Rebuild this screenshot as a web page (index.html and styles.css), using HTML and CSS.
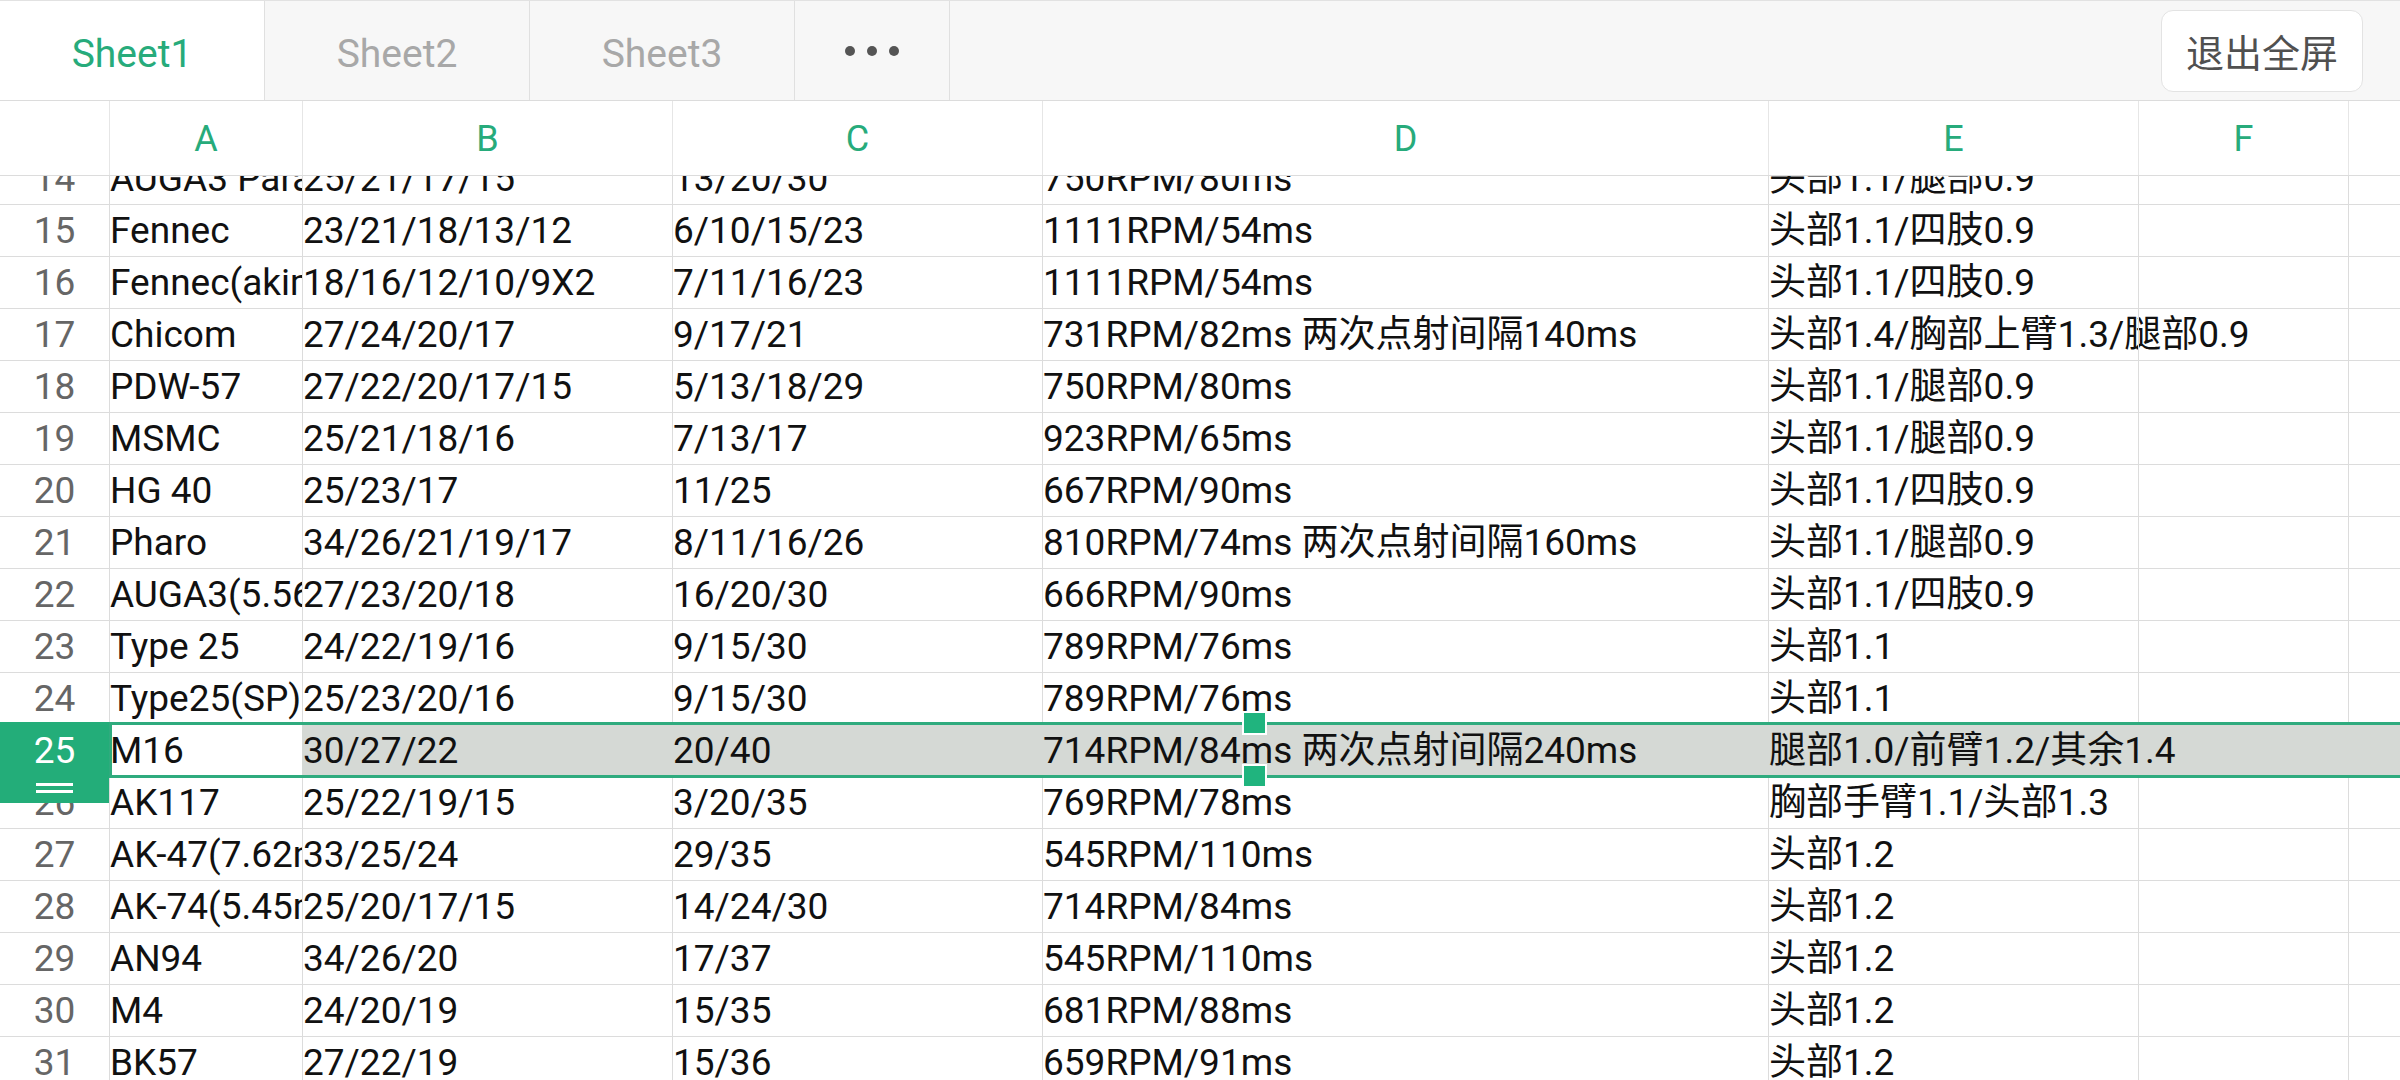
FILE: index.html
```html
<!DOCTYPE html>
<html lang="zh-CN">
<head>
  <meta charset="UTF-8">
  <title>Sheet1</title>
  <link rel="stylesheet" href="styles.css">
</head>
<body>
  <div class="tabbar">
    <div class="tab on">Sheet1</div>
    <div class="tab">Sheet2</div>
    <div class="tab">Sheet3</div>
    <div class="tab more"><span class="dot"></span><span class="dot"></span><span class="dot"></span></div>
    <button class="exit">退出全屏</button>
  </div>

  <div class="colhead">
    <div class="hcell corner"></div>
    <div class="hcell">A</div>
    <div class="hcell">B</div>
    <div class="hcell">C</div>
    <div class="hcell">D</div>
    <div class="hcell">E</div>
    <div class="hcell">F</div>
    <div class="hcell"></div>
  </div>

  <div class="viewport">
    <div class="rows">
      <div class="row"><div class="num">14</div><div class="cell">AUGA3 Para(5.56)</div><div class="cell">25/21/17/15</div><div class="cell">13/20/30</div><div class="cell">750RPM/80ms</div><div class="cell">头部1.1/腿部0.9</div><div class="cell"></div><div class="cell"></div></div>
      <div class="row"><div class="num">15</div><div class="cell">Fennec</div><div class="cell">23/21/18/13/12</div><div class="cell">6/10/15/23</div><div class="cell">1111RPM/54ms</div><div class="cell">头部1.1/四肢0.9</div><div class="cell"></div><div class="cell"></div></div>
      <div class="row"><div class="num">16</div><div class="cell">Fennec(akimbo)</div><div class="cell">18/16/12/10/9X2</div><div class="cell">7/11/16/23</div><div class="cell">1111RPM/54ms</div><div class="cell">头部1.1/四肢0.9</div><div class="cell"></div><div class="cell"></div></div>
      <div class="row"><div class="num">17</div><div class="cell">Chicom</div><div class="cell">27/24/20/17</div><div class="cell">9/17/21</div><div class="cell">731RPM/82ms 两次点射间隔140ms</div><div class="cell spill">头部1.4/胸部上臂1.3/腿部0.9</div><div class="cell"></div><div class="cell"></div></div>
      <div class="row"><div class="num">18</div><div class="cell">PDW-57</div><div class="cell">27/22/20/17/15</div><div class="cell">5/13/18/29</div><div class="cell">750RPM/80ms</div><div class="cell">头部1.1/腿部0.9</div><div class="cell"></div><div class="cell"></div></div>
      <div class="row"><div class="num">19</div><div class="cell">MSMC</div><div class="cell">25/21/18/16</div><div class="cell">7/13/17</div><div class="cell">923RPM/65ms</div><div class="cell">头部1.1/腿部0.9</div><div class="cell"></div><div class="cell"></div></div>
      <div class="row"><div class="num">20</div><div class="cell">HG 40</div><div class="cell">25/23/17</div><div class="cell">11/25</div><div class="cell">667RPM/90ms</div><div class="cell">头部1.1/四肢0.9</div><div class="cell"></div><div class="cell"></div></div>
      <div class="row"><div class="num">21</div><div class="cell">Pharo</div><div class="cell">34/26/21/19/17</div><div class="cell">8/11/16/26</div><div class="cell">810RPM/74ms 两次点射间隔160ms</div><div class="cell">头部1.1/腿部0.9</div><div class="cell"></div><div class="cell"></div></div>
      <div class="row"><div class="num">22</div><div class="cell">AUGA3(5.56)</div><div class="cell">27/23/20/18</div><div class="cell">16/20/30</div><div class="cell">666RPM/90ms</div><div class="cell">头部1.1/四肢0.9</div><div class="cell"></div><div class="cell"></div></div>
      <div class="row"><div class="num">23</div><div class="cell">Type 25</div><div class="cell">24/22/19/16</div><div class="cell">9/15/30</div><div class="cell">789RPM/76ms</div><div class="cell">头部1.1</div><div class="cell"></div><div class="cell"></div></div>
      <div class="row"><div class="num">24</div><div class="cell">Type25(SP)</div><div class="cell">25/23/20/16</div><div class="cell">9/15/30</div><div class="cell">789RPM/76ms</div><div class="cell">头部1.1</div><div class="cell"></div><div class="cell"></div></div>
      <div class="row sel">
        <div class="num">25</div><div class="cell active">M16</div><div class="cell">30/27/22</div><div class="cell">20/40</div><div class="cell">714RPM/84ms 两次点射间隔240ms</div><div class="cell spill">腿部1.0/前臂1.2/其余1.4</div><div class="cell"></div><div class="cell"></div>
        <div class="rowmark">25<div class="grip"></div></div>
        <div class="frame"><span class="knob top"></span><span class="knob bottom"></span></div>
      </div>
      <div class="row"><div class="num">26</div><div class="cell">AK117</div><div class="cell">25/22/19/15</div><div class="cell">3/20/35</div><div class="cell">769RPM/78ms</div><div class="cell">胸部手臂1.1/头部1.3</div><div class="cell"></div><div class="cell"></div></div>
      <div class="row"><div class="num">27</div><div class="cell">AK-47(7.62mm)</div><div class="cell">33/25/24</div><div class="cell">29/35</div><div class="cell">545RPM/110ms</div><div class="cell">头部1.2</div><div class="cell"></div><div class="cell"></div></div>
      <div class="row"><div class="num">28</div><div class="cell">AK-74(5.45mm)</div><div class="cell">25/20/17/15</div><div class="cell">14/24/30</div><div class="cell">714RPM/84ms</div><div class="cell">头部1.2</div><div class="cell"></div><div class="cell"></div></div>
      <div class="row"><div class="num">29</div><div class="cell">AN94</div><div class="cell">34/26/20</div><div class="cell">17/37</div><div class="cell">545RPM/110ms</div><div class="cell">头部1.2</div><div class="cell"></div><div class="cell"></div></div>
      <div class="row"><div class="num">30</div><div class="cell">M4</div><div class="cell">24/20/19</div><div class="cell">15/35</div><div class="cell">681RPM/88ms</div><div class="cell">头部1.2</div><div class="cell"></div><div class="cell"></div></div>
      <div class="row"><div class="num">31</div><div class="cell">BK57</div><div class="cell">27/22/19</div><div class="cell">15/36</div><div class="cell">659RPM/91ms</div><div class="cell">头部1.2</div><div class="cell"></div><div class="cell"></div></div>
    </div>
  </div>
</body>
</html>
```

FILE: styles.css
```css
* {
  box-sizing: border-box;
}

body {
  margin: 0;
  width: 2400px;
  height: 1080px;
  overflow: hidden;
  background-color: #fff;
  font-family: Roboto, "Noto Sans CJK SC", sans-serif;
  font-size: 37px;
  color: #111;
}

/* sheet tabs */
.tabbar {
  display: flex;
  height: 101px;
  background-color: #f7f7f7;
  border-top: 1px solid #e2e2e2;
  border-bottom: 1px solid #dcdcdc;
}

.tab {
  width: 265px;
  display: flex;
  align-items: center;
  justify-content: center;
  padding-top: 6px;
  border-right: 1px solid #e0e0e0;
  color: #a8a8a8;
  font-size: 39px;
}

.tab.on {
  background-color: #fff;
  color: #27ab7b;
}

.tab.more {
  width: 155px;
  gap: 12px;
  padding-top: 0;
}

.dot {
  width: 10px;
  height: 10px;
  border-radius: 50%;
  background-color: #555;
}

.exit {
  align-self: center;
  margin-left: auto;
  margin-right: 37px;
  width: 202px;
  height: 82px;
  background-color: #fff;
  border: 1px solid #e3e3e3;
  border-radius: 12px;
  font-family: "Noto Sans CJK SC", sans-serif;
  font-size: 38px;
  color: #505050;
  padding: 0;
}

/* grid */
.colhead,
.row {
  display: grid;
  grid-template-columns: 109px 193px 370px 370px 726px 370px 210px 1fr;
}

.colhead {
  height: 75px;
  border-bottom: 1px solid #dcdcdc;
}

.hcell {
  display: flex;
  align-items: center;
  justify-content: center;
  padding-top: 2px;
  border-left: 1px solid #e6e6e6;
  color: #27ab7b;
  font-size: 36px;
}

.hcell.corner {
  border-left: none;
}

.viewport {
  height: 904px;
  overflow: hidden;
}

.rows {
  margin-top: -23px;
}

.row {
  height: 52px;
}

.num,
.cell {
  height: 52px;
  line-height: 51px;
  border-bottom: 1px solid #dcdcdc;
  white-space: nowrap;
}

.num {
  text-align: center;
  color: #666;
}

.cell {
  border-left: 1px solid #dcdcdc;
  overflow: hidden;
}

.cell.spill {
  overflow: visible;
}

/* selected row 25 */
.row.sel {
  position: relative;
  background-color: #d5d9d5;
}

.row.sel .cell {
  border-left-color: #d5d9d5;
}

.row.sel .cell.active {
  background-color: #fff;
}

.rowmark {
  position: absolute;
  left: 0;
  top: -3px;
  width: 109px;
  height: 81px;
  z-index: 3;
  padding-top: 3px;
  background-color: #23ad79;
  color: #fff;
  text-align: center;
  line-height: 51px;
}

.grip {
  width: 37px;
  height: 10px;
  margin: 7px auto 0;
  border-top: 3px solid #fff;
  border-bottom: 3px solid #fff;
}

.frame {
  position: absolute;
  left: 109px;
  right: -10px;
  top: -3px;
  height: 56px;
  z-index: 3;
  border: 3px solid #2fab7e;
}

.knob {
  position: absolute;
  left: 1130px;
  width: 25px;
  height: 24px;
  border: 2px solid #fff;
  background-color: #20b47e;
}

.knob.top {
  top: -14px;
}

.knob.bottom {
  top: 39px;
}
```
